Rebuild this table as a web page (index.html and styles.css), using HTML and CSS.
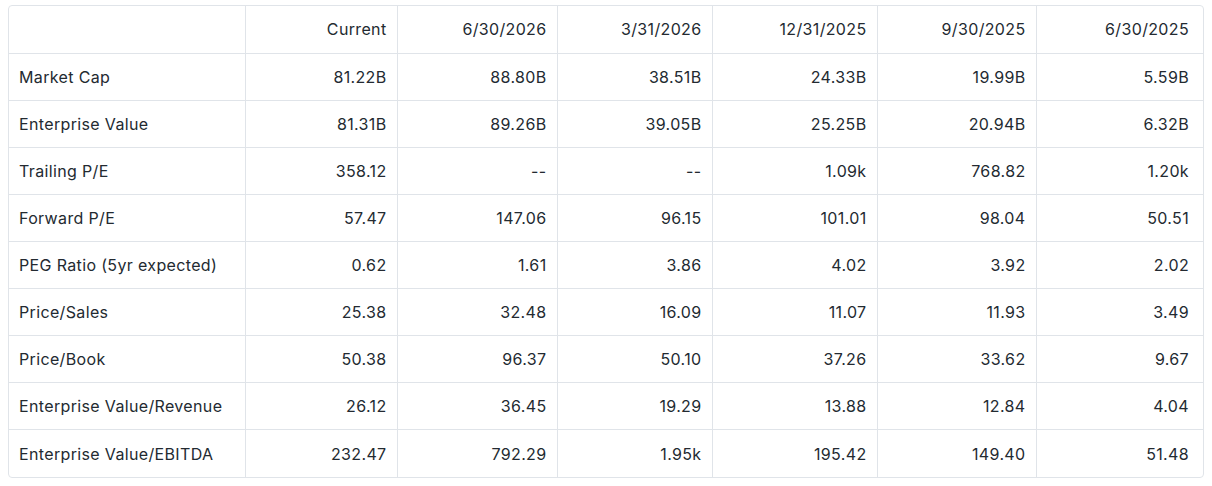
FILE: index.html
```html
<!DOCTYPE html>
<html>
<head>
<meta charset="utf-8">
<link rel="stylesheet" href="styles.css">
</head>
<body>
<div class="wrap">
<table class="stats">
<colgroup>
<col class="c0"><col class="c1"><col class="c2"><col class="c3"><col class="c4"><col class="c5"><col class="c6">
</colgroup>
<thead>
<tr><th></th><th>Current</th><th>6/30/2026</th><th>3/31/2026</th><th>12/31/2025</th><th>9/30/2025</th><th>6/30/2025</th></tr>
</thead>
<tbody>
<tr><td>Market Cap</td><td>81.22B</td><td>88.80B</td><td>38.51B</td><td>24.33B</td><td>19.99B</td><td>5.59B</td></tr>
<tr><td>Enterprise Value</td><td>81.31B</td><td>89.26B</td><td>39.05B</td><td>25.25B</td><td>20.94B</td><td>6.32B</td></tr>
<tr><td>Trailing P/E</td><td>358.12</td><td>--</td><td>--</td><td>1.09k</td><td>768.82</td><td>1.20k</td></tr>
<tr><td>Forward P/E</td><td>57.47</td><td>147.06</td><td>96.15</td><td>101.01</td><td>98.04</td><td>50.51</td></tr>
<tr><td>PEG Ratio (5yr expected)</td><td>0.62</td><td>1.61</td><td>3.86</td><td>4.02</td><td>3.92</td><td>2.02</td></tr>
<tr><td>Price/Sales</td><td>25.38</td><td>32.48</td><td>16.09</td><td>11.07</td><td>11.93</td><td>3.49</td></tr>
<tr><td>Price/Book</td><td>50.38</td><td>96.37</td><td>50.10</td><td>37.26</td><td>33.62</td><td>9.67</td></tr>
<tr><td>Enterprise Value/Revenue</td><td>26.12</td><td>36.45</td><td>19.29</td><td>13.88</td><td>12.84</td><td>4.04</td></tr>
<tr><td>Enterprise Value/EBITDA</td><td>232.47</td><td>792.29</td><td>1.95k</td><td>195.42</td><td>149.40</td><td>51.48</td></tr>
</tbody>
</table>
</div>
</body>
</html>
```
FILE: styles.css
```css
body {
  margin: 5px 8px;
  background: #ffffff;
  font-family: Inter, "Liberation Sans", Arial, sans-serif;
  color: #232a31;
}
.wrap {
  width: 1196px;
  box-sizing: border-box;
  border: 1px solid #e0e4e9;
  border-radius: 4px;
  overflow: hidden;
}
.stats {
  width: 100%;
  border-collapse: collapse;
  table-layout: fixed;
  font-size: 16px;
  letter-spacing: 0.35px;
}
.c0 { width: 236px; }
.c1 { width: 152px; }
.c2 { width: 160px; }
.c3 { width: 155px; }
.c4 { width: 165px; }
.c5 { width: 159px; }
.c6 { width: auto; }
.stats th, .stats td {
  height: 47.1px;
  padding: 0 10px;
  border-right: 1px solid #e0e4e9;
  border-bottom: 1px solid #e0e4e9;
  text-align: right;
  font-weight: normal;
  white-space: nowrap;
  box-sizing: border-box;
}
.stats th:last-child, .stats td:last-child {
  border-right: none;
  padding-right: 14px;
}
.stats tbody tr:last-child td { border-bottom: none; }
.stats td:first-child, .stats th:first-child {
  text-align: left;
}
```
